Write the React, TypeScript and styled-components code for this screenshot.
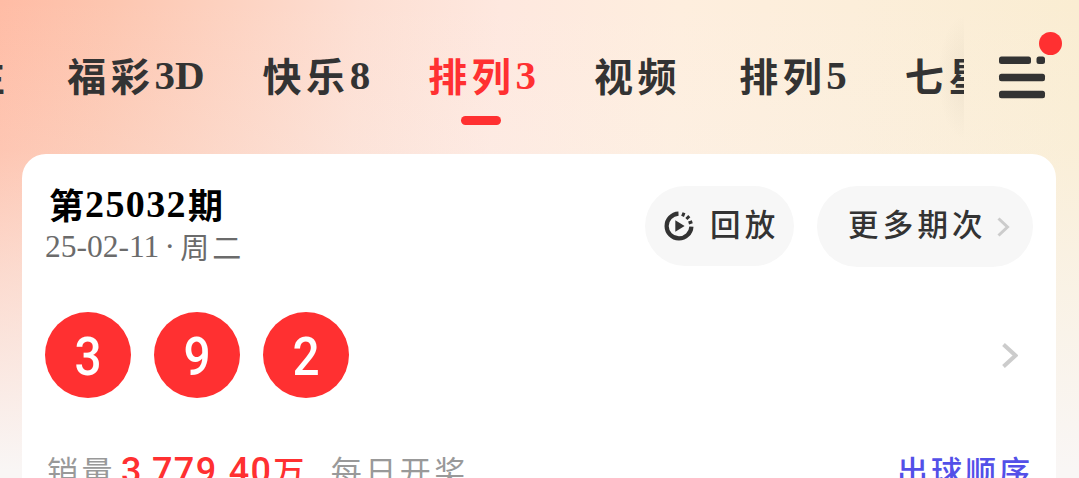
import React, { FC } from 'react'
import styled, { createGlobalStyle, css } from 'styled-components'

const COLORS = {
  RED: '#ff3031',
  INK: '#333333',
  BLACK: '#000000',
  GRAY: '#6b6b6b',
  LIGHT_GRAY: '#999999',
  ARROW: '#cccccc',
  BLUE: '#5350e8',
  PILL: '#f7f7f7',
} as const

type TabItem = {
  han: string
  latin?: string
}

const TABS: TabItem[] = [
  { han: '投注' },
  { han: '福彩', latin: '3D' },
  { han: '快乐', latin: '8' },
  { han: '排列', latin: '3' },
  { han: '视频' },
  { han: '排列', latin: '5' },
  { han: '七星' },
]

const ACTIVE_TAB = 3

const BALLS = [3, 9, 2]

const ReplayIcon: FC = () => (
  <svg width="30" height="30" viewBox="0 0 30 30" fill="none">
    <path d="M14.5 2.6A12.4 12.4 0 1 0 27.4 15.6" stroke={COLORS.INK} strokeWidth="4.2" />
    <path
      d="M18.6 5.4L20 1.7M22.4 8L25.3 5.2M24.6 12L28.3 10.8"
      stroke={COLORS.INK}
      strokeWidth="3"
    />
    <path d="M11.3 9.3V20.7L20.6 15Z" fill={COLORS.INK} />
  </svg>
)

const MenuIcon: FC = () => (
  <svg width="48" height="44" viewBox="0 0 48 44" fill={COLORS.INK}>
    <rect x="1" y="0.5" width="32" height="7.5" rx="2.5" />
    <rect x="38.5" y="0.5" width="8.5" height="7.5" rx="2.5" />
    <rect x="1" y="17.7" width="46" height="7.5" rx="2.5" />
    <rect x="1" y="34.8" width="46" height="7.5" rx="2.5" />
  </svg>
)

const Chevron: FC<{ width: number; height: number; strokeWidth: number }> = ({
  width,
  height,
  strokeWidth,
}) => (
  <svg width={width} height={height} viewBox={`0 0 ${width} ${height}`} fill="none">
    <path
      d={`M1.5 1.5L${width - 2.5} ${height / 2}L1.5 ${height - 1.5}`}
      stroke={COLORS.ARROW}
      strokeWidth={strokeWidth}
    />
  </svg>
)

const App: FC = () => {
  return (
    <StyledPage>
      <GlobalStyle />
      <StyledHeader>
        <StyledTabs>
          {TABS.map(({ han, latin }, i) => (
            <StyledTab key={i} $isActive={i === ACTIVE_TAB}>
              <StyledTabHan>{han}</StyledTabHan>
              {latin && <StyledTabLatin>{latin}</StyledTabLatin>}
            </StyledTab>
          ))}
        </StyledTabs>
        <StyledMenuButton>
          <MenuIcon />
          <StyledBadge />
        </StyledMenuButton>
      </StyledHeader>

      <StyledCard>
        <StyledCardHeader>
          <div>
            <StyledIssue>
              <span>第</span>
              <StyledIssueNumber>25032</StyledIssueNumber>
              <span>期</span>
            </StyledIssue>
            <StyledDate>
              25-02-11<StyledDot>·</StyledDot>
              <StyledDateHan>周二</StyledDateHan>
            </StyledDate>
          </div>
          <StyledActions>
            <StyledReplayPill>
              <ReplayIcon />
              <StyledPillLabel>回放</StyledPillLabel>
            </StyledReplayPill>
            <StyledMorePill>
              <StyledPillLabel>更多期次</StyledPillLabel>
              <Chevron width={13} height={20} strokeWidth={3} />
            </StyledMorePill>
          </StyledActions>
        </StyledCardHeader>

        <StyledBallRow>
          {BALLS.map((ball) => (
            <StyledBall key={ball}>
              <StyledBallNumber>{ball}</StyledBallNumber>
            </StyledBall>
          ))}
          <StyledRowArrow>
            <Chevron width={16} height={25} strokeWidth={4} />
          </StyledRowArrow>
        </StyledBallRow>

        <StyledSalesRow>
          <StyledSalesLabel>销量</StyledSalesLabel>
          <StyledAmount>3,779.40</StyledAmount>
          <StyledAmountUnit>万</StyledAmountUnit>
          <StyledSchedule>每日开奖</StyledSchedule>
          <StyledOrderLink>出球顺序</StyledOrderLink>
        </StyledSalesRow>
      </StyledCard>
    </StyledPage>
  )
}

export default App

const GlobalStyle = createGlobalStyle`
  * {
    box-sizing: border-box;
  }

  body {
    margin: 0;
    overflow: hidden;
  }
`

const hanFont = css`
  font-family: 'Noto Sans CJK SC', sans-serif;
`

const latinFont = css`
  font-family: 'Liberation Serif', serif;
`

const StyledPage = styled.div`
  ${hanFont}
  width: 1079px;
  height: 478px;
  overflow: hidden;
  display: flex;
  flex-direction: column;
  color: ${COLORS.INK};
  background: linear-gradient(
      180deg,
      rgba(249, 246, 245, 0) 0,
      rgba(249, 246, 245, 0.16) 150px,
      rgba(249, 246, 245, 0.5) 270px,
      rgba(249, 246, 245, 1) 470px
    ),
    linear-gradient(
      94deg,
      #ffbca5 0,
      #fdc6b0 110px,
      #fdd0be 210px,
      #fddfd3 360px,
      #fee8df 500px,
      #feeede 680px,
      #fceeda 850px,
      #faedd2 1079px
    );
`

const StyledHeader = styled.header`
  height: 154px;
  flex-shrink: 0;
  display: flex;
`

const StyledTabs = styled.nav`
  width: 964px;
  overflow: hidden;
  display: flex;
  padding-top: 44px;
  background: radial-gradient(
      ellipse 26px 62px at 100% 50%,
      rgba(120, 110, 90, 0.08),
      transparent
    )
    0 0 / 100% 154px no-repeat;

  & > :first-child {
    margin-left: -107px;
  }
`

const StyledTab = styled.div<{ $isActive: boolean }>`
  position: relative;
  flex-shrink: 0;
  display: flex;
  height: 81px;
  padding: 0 29px;
  line-height: 60px;
  font-size: 39px;
  font-weight: 700;

  ${({ $isActive }) =>
    $isActive &&
    css`
      color: ${COLORS.RED};

      &::after {
        content: '';
        position: absolute;
        left: 50%;
        bottom: 0;
        width: 40px;
        height: 9px;
        margin-left: -21px;
        border-radius: 5px;
        background: ${COLORS.RED};
      }
    `}
`

const StyledTabHan = styled.span`
  letter-spacing: 4.6px;
`

const StyledTabLatin = styled.span`
  ${latinFont}
  font-size: 41px;
  line-height: 63px;
`

const StyledMenuButton = styled.div`
  position: relative;
  padding: 56px 0 0 34px;
`

const StyledBadge = styled.span`
  position: absolute;
  top: 32px;
  left: 75px;
  width: 23px;
  height: 23px;
  border-radius: 50%;
  background: ${COLORS.RED};
`

const StyledCard = styled.main`
  height: 400px;
  flex-shrink: 0;
  margin: 0 23px 0 22px;
  padding: 32px 23px 0;
  border-radius: 24px;
  background: #ffffff;
`

const StyledCardHeader = styled.div`
  display: flex;
  justify-content: space-between;
  height: 126px;
`

const StyledIssue = styled.div`
  display: flex;
  height: 38px;
  padding-left: 4px;
  line-height: 36px;
  font-size: 35px;
  font-weight: 700;
  color: ${COLORS.BLACK};
`

const StyledIssueNumber = styled.span`
  ${latinFont}
  margin: 0 1px;
  font-size: 38px;
  letter-spacing: 1.4px;
`

const StyledDate = styled.div`
  ${latinFont}
  display: flex;
  height: 46px;
  line-height: 46px;
  font-size: 31.5px;
  color: ${COLORS.GRAY};
`

const StyledDot = styled.span`
  width: 21px;
  text-align: center;
`

const StyledDateHan = styled.span`
  ${hanFont}
  font-size: 29px;
  line-height: 44px;
  letter-spacing: 3px;
`

const StyledActions = styled.div`
  display: flex;
  gap: 23px;
`

const pill = css`
  display: flex;
  align-items: center;
  border-radius: 41px;
  background: ${COLORS.PILL};
`

const StyledReplayPill = styled.div`
  ${pill}
  width: 149px;
  height: 80px;
  padding-left: 19px;
  gap: 16px;
`

const StyledMorePill = styled.div`
  ${pill}
  width: 216px;
  height: 81px;
  padding-left: 31px;
  gap: 10px;
`

const StyledPillLabel = styled.span`
  padding-bottom: 7px;
  font-size: 30.5px;
  font-weight: 500;
  letter-spacing: 4.2px;
`

const StyledBallRow = styled.div`
  display: flex;
  align-items: center;
  gap: 23px;
`

const StyledBall = styled.div`
  width: 86px;
  height: 86px;
  border-radius: 50%;
  background: ${COLORS.RED};
  color: #ffffff;
  font-family: Roboto, sans-serif;
  font-size: 53px;
  font-weight: 500;
  line-height: 90px;
  text-align: center;
`

const StyledBallNumber = styled.span`
  display: inline-block;
  transform: scaleX(0.9);
`

const StyledRowArrow = styled.div`
  display: flex;
  margin-left: auto;
  padding-right: 15px;
`

const StyledSalesRow = styled.div`
  display: flex;
  align-items: baseline;
  padding-left: 2px;
  margin-top: 49px;
  line-height: 46px;
  font-size: 31px;
  letter-spacing: 3.5px;
`

const StyledSalesLabel = styled.span`
  color: ${COLORS.LIGHT_GRAY};
`

const StyledAmount = styled.span`
  margin-left: 5px;
  color: ${COLORS.RED};
  font-family: Roboto, sans-serif;
  font-size: 36px;
  font-weight: 500;
  letter-spacing: 1.3px;
`

const StyledAmountUnit = styled.span`
  margin-left: 1px;
  color: ${COLORS.RED};
  font-weight: 500;
`

const StyledSchedule = styled.span`
  margin-left: 23px;
  color: ${COLORS.LIGHT_GRAY};
`

const StyledOrderLink = styled.span`
  margin-left: auto;
  color: ${COLORS.BLUE};
  font-weight: 500;
  letter-spacing: 3px;
`
